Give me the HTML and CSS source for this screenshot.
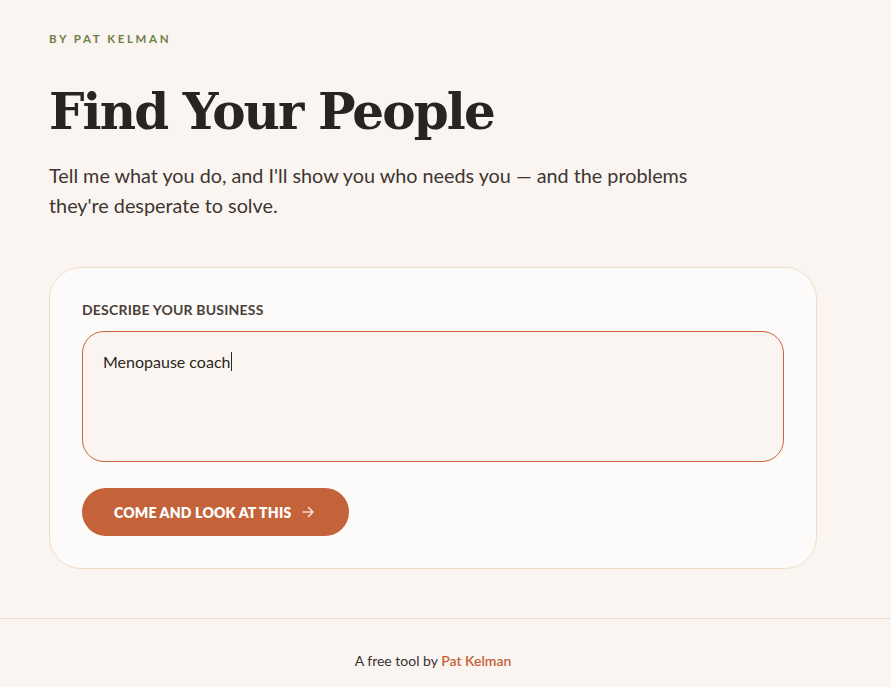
FILE: index.html
```html
<!DOCTYPE html>
<html lang="en">
<head>
<meta charset="utf-8">
<title>Find Your People</title>
<link rel="stylesheet" href="styles.css">
</head>
<body>
<main class="container">
  <p class="eyebrow">BY PAT KELMAN</p>
  <h1 class="title">Find Your People</h1>
  <p class="lede">Tell me what you do, and I'll show you who needs you — and the problems they're desperate to solve.</p>
  <section class="card">
    <label class="label" for="biz">DESCRIBE YOUR BUSINESS</label>
    <div class="field" id="biz"><span class="value">Menopause coach</span><span class="caret"></span></div>
    <button class="btn" type="button">COME AND LOOK AT THIS
      <svg class="arrow" width="14" height="14" viewBox="0 0 14 14" fill="none" stroke="currentColor" stroke-width="1.6" stroke-linecap="round" stroke-linejoin="round"><path d="M2 7h10M7.5 2.5 12 7l-4.5 4.5"/></svg>
    </button>
  </section>
</main>
<footer class="footer">
  <div class="footer-inner">A free tool by <a class="link" href="#">Pat Kelman</a></div>
</footer>
</body>
</html>
```
FILE: styles.css
```css
* { box-sizing: border-box; }
html, body { margin: 0; padding: 0; }
body {
  background: #faf5f0;
  font-family: "Lato", "Noto Sans", sans-serif;
  color: #2c2522;
}
.container {
  width: 768px;
  margin-left: 49px;
  padding-top: 31px;
  padding-bottom: 49px;
}
.eyebrow {
  margin: 0;
  font-size: 11.5px;
  font-weight: 700;
  letter-spacing: 2.6px;
  color: #6e8047;
  line-height: 16px;
}
.title {
  margin: 33px 0 0;
  font-family: "DejaVu Serif", serif;
  font-weight: 700;
  font-size: 50px;
  letter-spacing: -1.9px;
  line-height: 64px;
  color: #2a2421;
}
.lede {
  margin: 16px 0 0;
  max-width: 650px;
  font-size: 19.8px;
  line-height: 30px;
  color: #3e3532;
}
.card {
  margin-top: 47px;
  background: #fdfbf9;
  border: 1px solid #f0dcc9;
  border-radius: 32px;
  padding: 32px;
  display: flex;
  flex-direction: column;
  align-items: flex-start;
}
.label {
  font-size: 14px;
  font-weight: 700;
  color: #4a3f3a;
  letter-spacing: 0.2px;
  line-height: 18px;
  margin-top: 1px;
}
.field {
  margin-top: 12px;
  width: 100%;
  height: 131px;
  border: 1.5px solid #c8633c;
  border-radius: 22px;
  background: #faf5f0;
  padding: 20px 20px;
  font-size: 16px;
  line-height: 20px;
  color: #2c2522;
  display: flex;
  align-items: flex-start;
}
.caret {
  display: inline-block;
  width: 1px;
  height: 19px;
  background: #2c2522;
  margin-left: 1px;
}
.btn {
  margin-top: 26px;
  height: 48px;
  padding: 0 34px 0 32px;
  border: none;
  border-radius: 24px;
  background: #c4623a;
  color: #fff;
  font-family: "Lato", "Noto Sans", sans-serif;
  font-size: 14px;
  font-weight: 800;
  letter-spacing: 0.2px;
  display: flex;
  align-items: center;
  gap: 10px;
}
.arrow { color: #f6ddd0; }
.footer {
  border-top: 1px solid #ecdfd4;
}
.footer-inner {
  width: 768px;
  margin-left: 49px;
  text-align: center;
  padding: 33px 0 30px;
  font-size: 14px;
  line-height: 18px;
  color: #3a3230;
}
.link {
  color: #c4623a;
  font-weight: 600;
  text-decoration: none;
}
```
